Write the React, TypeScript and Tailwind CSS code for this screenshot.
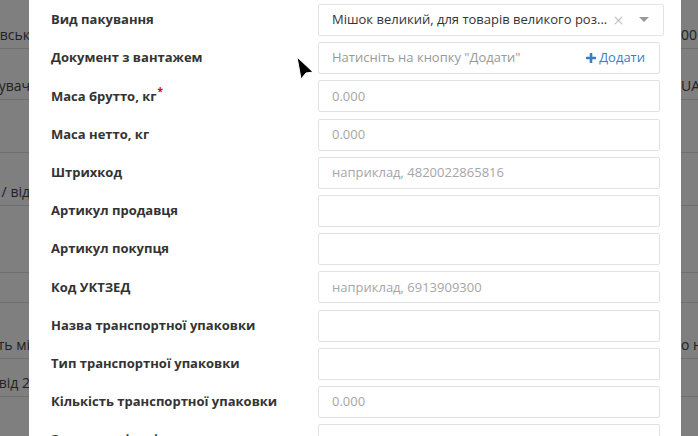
import React from 'react';

type Field = {
  label: string;
  kind: 'select' | 'doc' | 'input';
  placeholder?: string;
  required?: boolean;
};

const fields: Field[] = [
  { label: 'Вид пакування', kind: 'select' },
  { label: 'Документ з вантажем', kind: 'doc' },
  { label: 'Маса брутто, кг', kind: 'input', placeholder: '0.000', required: true },
  { label: 'Маса нетто, кг', kind: 'input', placeholder: '0.000' },
  { label: 'Штрихкод', kind: 'input', placeholder: 'наприклад, 4820022865816' },
  { label: 'Артикул продавця', kind: 'input' },
  { label: 'Артикул покупця', kind: 'input' },
  { label: 'Код УКТЗЕД', kind: 'input', placeholder: 'наприклад, 6913909300' },
  { label: 'Назва транспортної упаковки', kind: 'input' },
  { label: 'Тип транспортної упаковки', kind: 'input' },
  { label: 'Кількість транспортної упаковки', kind: 'input', placeholder: '0.000' },
  { label: 'Загальна кількість', kind: 'input' },
];

// dimmed page rows behind the modal
const bgRows = [
  { h: 49, left: 'Львівськ', right: '00' },
  { h: 51, left: 'Пакувач', right: 'UA' },
  { h: 53, left: '', right: '' },
  { h: 53, left: 'Так / від', right: '' },
  { h: 67, left: '', right: '' },
  { h: 30, left: '', right: '' },
  { h: 56, left: 'Кількість мі', right: 'о на' },
  { h: 38, left: 'від 2', right: '' },
];

const Row: React.FC<{ f: Field }> = ({ f }) => (
  <div className="flex items-center h-[32px]">
    <div className="w-[267px] shrink-0 text-[13px] font-bold text-[#333] whitespace-nowrap">
      {f.label}
      {f.required && <span className="text-[#d0021b] text-[10px] ml-[1px] relative -top-[6px]">*</span>}
    </div>
    <div className="flex-1 h-[32px] border border-[#e2e2e2] rounded-[2px] bg-white flex items-center pl-[13px] pr-[12px] text-[13px]">
      {f.kind === 'select' && (
        <>
          <span className="flex-1 truncate text-[#333]">Мішок великий, для товарів великого роз...</span>
          <span className="text-[#aaa] text-[18px] font-light ml-[6px] leading-none">×</span>
          <svg width="10" height="6" viewBox="0 0 10 6" className="ml-[15px] mr-[2px]">
            <path d="M0 0 L10 0 L5 5 Z" fill="#999" />
          </svg>
        </>
      )}
      {f.kind === 'doc' && (
        <>
          <span className="flex-1 text-[#999]">Натисніть на кнопку "Додати"</span>
          <span className="text-[#3b7dc4] flex items-center gap-[3px] mr-[2px]">
            <svg width="10" height="10" viewBox="0 0 10 10">
              <path d="M3.7 0 H6.3 V3.7 H10 V6.3 H6.3 V10 H3.7 V6.3 H0 V3.7 H3.7 Z" fill="#3b7dc4" />
            </svg>
            Додати
          </span>
        </>
      )}
      {f.kind === 'input' && <span className="text-[#a6a6a6]">{f.placeholder ?? ''}</span>}
    </div>
  </div>
);

const App: React.FC = () => {
  return (
    <div className="relative w-[698px] h-[436px] overflow-hidden bg-white font-['Open_Sans','DejaVu_Sans',sans-serif]">
      {/* page underneath */}
      <div className="flex flex-col">
        {bgRows.map((r, i) => (
          <div
            key={i}
            className="flex items-end justify-between border-b border-[#ddd] text-[14px] text-[#444] pb-[3px]"
            style={{ height: r.h }}
          >
            <div className="w-[30px] overflow-hidden flex justify-end">
              <span className="whitespace-nowrap">{r.left}</span>
            </div>
            <div className="w-[17px] overflow-hidden">
              <span className="whitespace-nowrap">{r.right}</span>
            </div>
          </div>
        ))}
      </div>

      {/* backdrop */}
      <div className="absolute inset-0 bg-black/50" />

      {/* modal */}
      <div className="absolute top-0 left-[29px] w-[652px] h-[436px] bg-white overflow-hidden">
        <div className="flex flex-col gap-[6.2px] pt-[4px] pl-[22px] pr-[21px]">
          {fields.map((f) => (
            <Row key={f.label} f={f} />
          ))}
        </div>
      </div>

      {/* mouse cursor */}
      <svg className="absolute left-[296px] top-[56px]" width="20" height="24" viewBox="0 0 20 24">
        <path d="M1 1 L17 16 L10 17 L5 23 Z" fill="#000" stroke="#fff" strokeWidth="1" strokeLinejoin="round" />
      </svg>
    </div>
  );
};

export default App;
